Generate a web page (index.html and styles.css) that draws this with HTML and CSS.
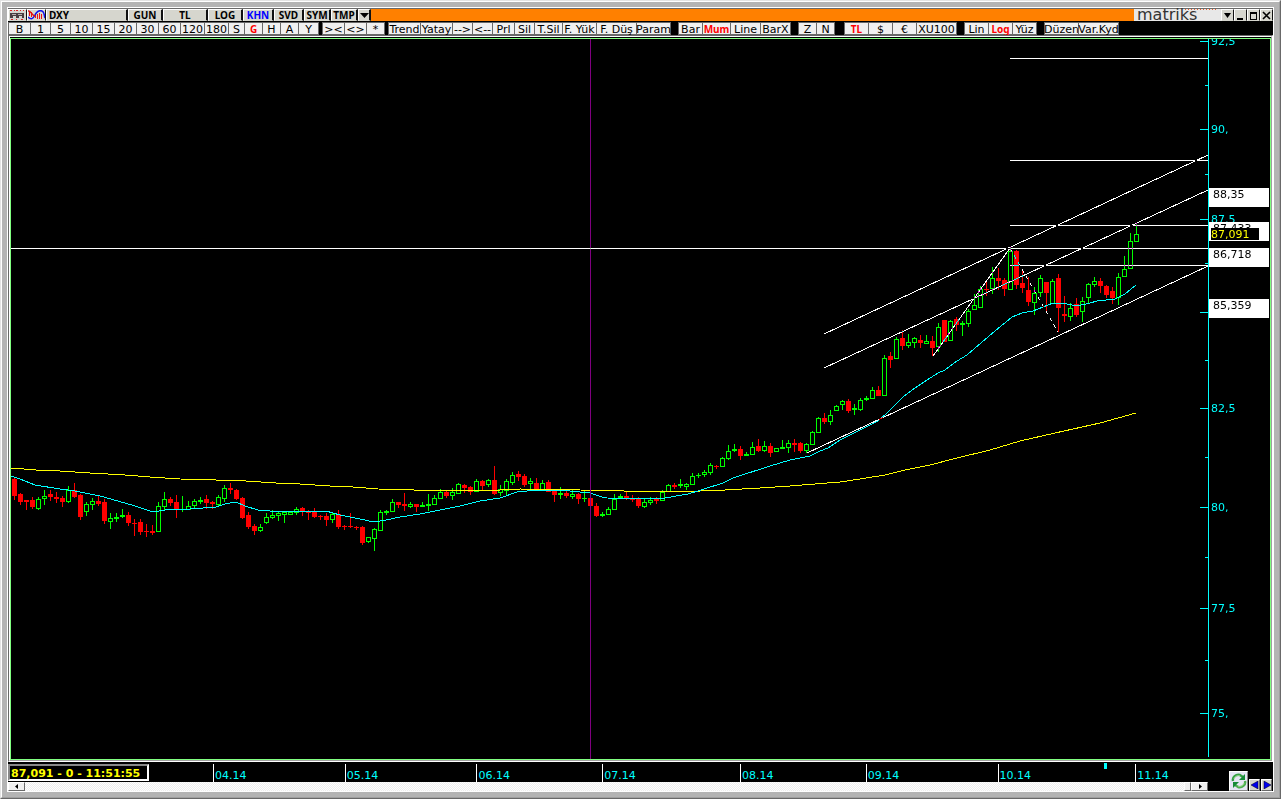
FILE: index.html
```html
<!DOCTYPE html>
<html lang="tr">
<head>
<meta charset="utf-8">
<title>DXY - Matriks</title>
<link rel="stylesheet" href="styles.css">
</head>
<body>
<div class="window"><div class="window-bevel"><main class="panel">
  <header class="titlebar">
    <button class="tool icon-tool" aria-label="Menü"><svg width="17" height="10" viewBox="0 0 17 10" shape-rendering="crispEdges"><path d="M1 0h2v1H1zM5 0h1v1H5zM7 0h2v1H7zM11 0h1v1h-1zM14 0h1v1h-1zM2 9h2v1H2zM7 9h1v1H7zM12 9h2v1h-2z" fill="#e02020"/><path d="M1 8V3h14v5h-2V6h-3v2H7V6H4v2z" fill="#4a4040"/><path d="M3 4h4v1H3zM9 4h4v1H9z" fill="#b8b0b0"/></svg></button>
    <button class="tool icon-tool" aria-label="Grafik"><svg width="17" height="10" viewBox="0 0 17 10"><path d="M1.500 1v5M3.500 2v5M9.500 4v5M11.500 3v6M13.500 4v5M7.500 4v4" stroke="#f01010"/><path d="M0 7C3 10 5 9 7 5S11 0 14 1s2 6 3 7" stroke="#1010ee" stroke-width="1.500" fill="none"/><path d="M0 1C3 0 4 6 7 6" stroke="#e01010" stroke-width="1.500" fill="none"/></svg></button>
    <input class="symbol" aria-label="Sembol" value="DXY">
    <button class="tool w35">GUN</button><button class="tool w45">TL</button><button class="tool w35">LOG</button><button class="tool w31 blue">KHN</button><button class="tool w30">SVD</button><button class="tool w27">SYM</button><button class="tool w27">TMP</button>
    <button class="tool w13" aria-label="Liste"><svg width="9" height="6" viewBox="0 0 9 6"><path d="M0 1h9L4.500 6z"/></svg></button>
    <div class="drag"></div>
    <div class="logo"><svg width="87" height="12" viewBox="0 0 87 12"><path d="M51 .5h31" stroke="#e86030" stroke-dasharray="1 2"/><text class="logo-text" x="3" y="11">matriks</text></svg></div>
    <button class="tool win" aria-label="Seçenekler"><svg width="9" height="9" viewBox="0 0 9 9"><path d="M1 2h7L4.500 7z"/></svg></button>
    <button class="tool win" aria-label="Küçült"><svg width="9" height="9" viewBox="0 0 9 9"><path d="M1 7h6v2H1z"/></svg></button>
    <button class="tool win" aria-label="Büyüt"><svg width="9" height="9" viewBox="0 0 9 9"><path d="M1 1h7v8H1zM2 3v5h5V3z" fill-rule="evenodd"/></svg></button>
    <button class="tool win" aria-label="Kapat"><svg width="9" height="9" viewBox="0 0 9 9"><path d="M1 1l7 7M8 1L1 8" stroke="#000" stroke-width="1.600"/></svg></button>
  </header>

  <nav class="toolbar" aria-label="Grafik araçları">
    <div class="group"><button class="w22">B</button><button class="w20">1</button><button class="w20">5</button><button class="w22">10</button><button class="w22">15</button><button class="w22">20</button><button class="w22">30</button><button class="w22">60</button><button class="w24">120</button><button class="w24">180</button><button class="w16">S</button><button class="w18 red">G</button><button class="w18">H</button><button class="w18">A</button><button class="w20">Y</button></div>
    <div class="group"><button class="w22">&gt;&lt;</button><button class="w22">&lt;&gt;</button><button class="w18">*</button></div>
    <div class="group"><button class="w32">Trend</button><button class="w32">Yatay</button><button class="w20">--&gt;</button><button class="w20">&lt;--</button><button class="w22">Prl</button><button class="w20">Sil</button><button class="w28">T.Sil</button><button class="w34">F. Yük</button><button class="w40">F. Düş</button><button class="w34">Param</button></div>
    <div class="group wide-gap"><button class="w24">Bar</button><button class="w28 red">Mum</button><button class="w30">Line</button><button class="w30">BarX</button></div>
    <div class="group wide-gap"><button class="w18">Z</button><button class="w18">N</button></div>
    <div class="group wider-gap"><button class="w24 red">TL</button><button class="w24">$</button><button class="w24">€</button><button class="w40">XU100</button></div>
    <div class="group wide-gap"><button class="w24">Lin</button><button class="w24 red">Log</button><button class="w24">Yüz</button></div>
    <div class="group wide-gap"><button class="w34">Düzen</button><button class="w40">Var.Kyd</button></div>
  </nav>

  <section class="chart-frame"><div class="chart-inner">
    <svg class="chart" id="chart" viewBox="11 39 1259 720" role="img" aria-label="DXY günlük mum grafiği">
      <g id="candles" shape-rendering="crispEdges"></g>
      <g class="average" shape-rendering="crispEdges">
        <polyline stroke="#ff0" points="11,468 36,470 60,471 90,473 125,475 150,477 180,479 216,480 246,481 276,483 300,484 330,486 353,487 378,489 414,490 500,490 520,489 580,490 624,491 700,491 725,490 760,488 790,486 840,482 860,479 885,475 905,470 930,465 953,459 990,450 1020,441 1055,433 1100,423 1136,413"/>
        <polyline stroke="#0ff" points="11,476 20,479 35,485 60,489 75,491 100,496 118,501 135,506 153,512 165,510 190,509 216,507 225,504 236,502 245,506 258,510 270,511 326,511 340,515 350,517 360,519 374,522 386,520 400,517 420,514 440,510 460,506 480,501 500,498 517,492 538,490 570,491 590,493 602,497 607,498 652,499 665,498 688,494 701,490 723,483 733,478 770,466 790,460 810,456 820,451 828,448 840,440 878,421 887,413 903,397 915,388 927,380 938,373 945,370 957,361 967,355 995,331 1012,317 1022,313 1033,311 1053,303 1062,303 1077,306 1090,303 1097,301 1115,299 1125,294 1136,285"/>
      </g>
      <rect x="590" y="39" width="1" height="720" fill="#800080"/>
      <g class="drawing" shape-rendering="crispEdges">
        <path d="M1010 58.500H1208"/><path d="M1010 160.500H1208"/><path d="M1010 225.500H1208"/><path d="M11 248.500H1208"/><path d="M1010 265.500H1208"/>
        <path d="M824 334L1208 155"/><path d="M824 368L1208 190"/><path d="M807 453L1208 266"/>
        <path d="M933 356L1010 248"/><path d="M1010 248L1058 332" stroke-dasharray="4 4"/>
      </g>
      <g id="axis"></g>
    </svg>
  </div></section>

  <footer class="footer">
    <div class="timeline">
      <div class="dates">
        <div class="quote">87,091 - 0 - 11:51:55</div>
        <div class="lead"></div>
        <div class="month g132">04.14</div><div class="month g132">05.14</div><div class="month g126">06.14</div><div class="month g138">07.14</div><div class="month g126">08.14</div><div class="month g132">09.14</div><div class="month g138 marked">10.14</div><div class="month g72">11.14</div>
      </div>
      <div class="scroll">
        <button class="scroll-btn" aria-label="Sola kaydır"><svg width="4" height="5" viewBox="0 0 4 5"><path d="M3 0v5L0 2.500z"/></svg></button>
        <div class="track"></div><div class="thumb"></div>
        <button class="scroll-btn" aria-label="Sağa kaydır"><svg width="4" height="5" viewBox="0 0 4 5"><path d="M1 0v5l3-2.500z"/></svg></button>
      </div>
    </div>
    <div class="navigation">
      <button class="refresh" aria-label="Yenile"><svg width="16" height="16" viewBox="0 0 16 16"><path d="M2 8C1 4 5 1 9 2l3 2" fill="none" stroke="#35a045" stroke-width="2.400"/><path d="M14 1v6H8z" fill="#168a38"/><path d="M14 8c1 4-3 7-7 6l-3-2" fill="none" stroke="#4cad50" stroke-width="2.400"/><path d="M2 15V9h6z" fill="#168a38"/><path d="M3 6c1-3 4-4 6-3M13 10c-1 3-4 4-6 3" fill="none" stroke="#a5e09a" stroke-width="1"/></svg></button>
      <button class="nav" aria-label="Önceki"><svg width="8" height="8" viewBox="0 0 8 8"><path d="M7 0v8L0 4z" fill="#00e" stroke="#000" stroke-width=".5"/></svg></button>
      <button class="nav" aria-label="Sonraki"><svg width="8" height="8" viewBox="0 0 8 8"><path d="M1 0v8l7-4z" fill="#00e" stroke="#000" stroke-width=".5"/></svg></button>
    </div>
  </footer>
</main></div></div>
<script src="chart.js"></script>
</body>
</html>
```

FILE: styles.css
```css
* { box-sizing: border-box; }
body { margin: 0; background: #b4b4b4; font: 11px/11px "DejaVu Sans", sans-serif; }
button, input { margin: 0; padding: 0; border: 0; border-radius: 0; font: inherit; color: #000; white-space: nowrap; }
button { display: flex; align-items: center; justify-content: center; flex: none; }
svg { display: block; flex: none; }

.window { height: 100vh; border: 1px solid; border-color: #e3e3e3 #696969 #696969 #e3e3e3; }
.window-bevel { height: 100%; padding: 5px; border: 1px solid; border-color: #fff #a0a0a0 #a0a0a0 #fff; }
.panel { height: 100%; border: 1px solid #fff; background: #000; display: flex; flex-direction: column; }

/* Title bar */
.titlebar { display: flex; flex: none; height: 14px; border-top: 1px solid #696969; border-bottom: 1px solid #000; background: #000; font: bold 10px/11px "Noto Sans", sans-serif; }
.tool, .symbol { height: 12px; background: #d6d6ce; border: 1px solid; border-color: #fff #444 #d6d6ce #fff; }
.tool { border-right: 2px solid #111; }
.icon-tool { width: 19px; border-right-width: 1px; }
.symbol { width: 82px; padding-left: 2px; border-right: 2px solid #111; }
.blue { color: #00f; }
.drag { flex: 1; background: #ff8000; }
.logo { width: 87px; background: #e8e8e8; }
.logo svg { overflow: visible; }
.logo-text { font: 16px "DejaVu Sans", sans-serif; fill: #333; }
.win { width: 13px; border-right-width: 1px; }

/* Toolbar */
.toolbar { display: flex; flex: none; height: 13px; background: #000; }
.group { display: flex; border: 1px solid #696969; border-left: 0; margin-right: 3px; }
.wide-gap { margin-left: 4px; }
.wider-gap { margin-left: 6px; }
.group button { height: 11px; padding-top: 2px; border-left: 1px solid #696969; background: #f0f0f0; }
.group .red { color: #f00; font: bold 10px/11px "Noto Sans", sans-serif; }

.w13 { width: 13px; } .w16 { width: 16px; } .w18 { width: 18px; } .w20 { width: 20px; }
.w22 { width: 22px; } .w24 { width: 24px; } .w27 { width: 27px; } .w28 { width: 28px; }
.w30 { width: 30px; } .w31 { width: 31px; } .w32 { width: 32px; } .w34 { width: 34px; }
.w35 { width: 35px; } .w40 { width: 40px; } .w45 { width: 45px; }

/* Chart */
.chart-frame { flex: 1; min-height: 0; border: 1px solid; border-color: #696969 #fff #fff #696969; }
.chart-inner { height: 100%; padding-top: 1px; border: 1px solid; border-color: #fff #a0a0a0 #a0a0a0 #fff; background: #000; }
.chart { width: 100%; height: 100%; border: 1px solid #80ff80; background: #000; isolation: isolate; }
.average polyline { fill: none; stroke-width: 1; }
.drawing path { fill: none; stroke: #fff; stroke-width: 1; mix-blend-mode: difference; }
.scale { fill: #0ff; }
.level { fill: #000; }
.last { fill: #ff0; }

/* Dates, scroll bar and navigation */
.footer { display: flex; flex: none; height: 29px; }
.timeline { flex: 1; min-width: 0; display: flex; flex-direction: column; }
.dates { display: flex; height: 20px; padding-top: 2px; color: #0ff; }
.quote { flex: none; width: 141px; height: 17px; padding: 2px 0 0 1px; border: 2px solid; border-color: #888 #fff #fff #888; color: #ff0; font-weight: bold; white-space: nowrap; }
.lead { flex: 63 1 0; padding-left: 2px; }
.month { position: relative; min-width: 0; padding: 6px 0 0 1px; border-left: 1px solid #fff; }
.g132 { flex: 132 1 0; } .g126 { flex: 126 1 0; } .g138 { flex: 138 1 0; } .g72 { flex: 72 1 0; }
.marked::after { content: ""; position: absolute; left: 77%; top: -1px; width: 3px; height: 6px; background: #0ff; }
.scroll { display: flex; height: 9px; }
.scroll-btn { width: 17px; height: 9px; background: #f0f0f0; border: 1px solid; border-color: #fff #696969 #696969 #fff; }
.track { flex: 1; background: repeating-conic-gradient(#fff 0 25%, #eee 0 50%) 0 0 / 2px 2px; }
.thumb { width: 7px; background: #f0f0f0; border: 1px solid; border-color: #fff #696969 #696969 #fff; }
.navigation { display: flex; flex: none; width: 65px; padding-right: 1px; align-items: flex-end; justify-content: flex-end; gap: 1px; }
.refresh { width: 19px; height: 20px; background: #e4e4f4; border: 1px solid; border-color: #fff #888 #888 #fff; }
.nav { width: 11px; height: 12px; background: #d6d6ce; border: 1px solid; border-color: #fff #696969 #696969 #fff; }
```

FILE: chart.js
```js
// Each run of bars: top offset, then rows of direction, high, body top, body bottom, low (3 units per pixel).
const runs = [
  [450, `r 84 87 138 150;r 129 132 156 165;r 150 150 156 180;r 142 150 171 177;g 141 147 177 180;g 120 138 147 165;r 120 132 141 153;r 126 141 147 159;r 138 144 156 171;g 108 120 156 159;r 99 120 141 144;r 132 135 201 210;g 156 162 186 198;g 144 153 165 180;r 138 153 162 168;r 147 156 213 222;g 189 204 216 237;g 189 201 207 216;g 177 195 201 204;r 186 195 219 228;r 207 219 222 258;r 207 216 246 255;r 222 243 246 261;r 225 243 249 255;g 156 168 246 246;g 126 147 171 180;r 141 147 159 168;r 135 156 177 204;g 138 177 180 186;g 153 168 180 180;g 147 153 168 174;g 141 150 156 162;r 135 147 159 177;r 153 156 162 177;g 135 141 165 171;g 105 114 147 156;r 99 114 120 132;r 117 120 147 150;r 141 144 204 207;r 186 195 231 237;r 222 228 243 255;g 222 231 243 246;g 189 201 219 222;g 180 195 204 207;g 183 189 198 213;g 183 186 195 219;g 183 186 195 195;g 171 177 189 195;r 171 174 186 198;r 180 184 189 210;r 174 186 201 204;r 195 198 201 210;r 189 198 210 228;g 186 192 210 219;r 180 192 231 237;r 225 228 231 240;r 189 228 231 234;r 228 231 234 240;r 228 231 279 285;g 261 261 276 279;g 234 237 267 303;g 180 186 243 243;g 180 183 189 195;g 147 156 186 186;r 156 156 165 174;r 129 162 168 183;g 156 162 171 174;r 162 162 171 186;g 156 165 171 171;g 132 162 168 183;g 135 144 165 165;g 117 126 147 147;r 120 126 138 144;g 114 126 138 150;g 99 102 132 132;r 102 105 114 129;r 108 111 126 135;g 87 93 126 126;r 90 93 108 120;g 87 90 105 111;r 48 90 132 135;g 105 117 129 138;g 87 93 123 135;g 66 75 99 105;r 63 72 81 93;r 72 78 105 111;g 84 93 102 120;r 84 99 120 120;g 90 99 120 123;r 90 96 126 126;r 120 123 135 156;g 111 129 135 147;r 123 129 138 144;g 120 132 141 147;r 129 132 147 162;g 120 144 147 156`],
  [400, `r 294 294 318 318;r 309 318 348 351;g 336 342 348 351;g 321 327 345 345;g 282 297 330 330;g 282 288 294 297;r 276 288 297 300;r 285 297 300 306;r 291 297 318 324;g 297 306 321 324;g 291 300 309 315;r 291 297 303 312;g 270 276 303 303;g 252 255 276 276;r 249 255 261 267;g 237 252 258 264;g 249 252 261 270;g 219 228 255 255;g 219 225 228 234;g 210 216 225 231;g 189 195 219 225;r 195 198 201 207;g 171 174 201 201;g 135 153 177 180;g 132 147 153 156;r 138 147 168 180;g 156 162 168 168;g 126 141 165 165;r 117 138 153 156;g 123 138 153 156;r 129 138 159 171;g 144 144 156 156;g 120 141 147 147;g 120 129 144 159;r 117 129 135 156;r 126 129 153 159;g 129 132 153 158;g 93 96 135 135;g 51 54 99 99;r 39 54 66 72;g 30 45 66 75;g 15 18 33 33`],
  [310, `g 270 273 285 300;r 267 273 303 309;g 282 294 300 315;g 264 270 300 303;g 258 264 270 273;g 231 240 267 267;r 228 240 258 258;g 135 144 258 258;r 126 138 150 174;g 81 87 147 147;r 60 84 108 120;g 72 96 108 114;g 81 84 99 114;r 75 90 99 114;g 75 93 102 102;r 78 93 114 138;g 39 51 111 126;r 30 30 96 96;g 30 33 93 93;r 21 27 45 63;g 33 39 45 78`],
  [215, `g 282 288 327 336;g 237 270 285 285;g 213 222 279 279;r 201 222 225 243;g 156 189 222 237;r 159 189 198 225;r 189 195 222 243;g 96 108 225 225;r 105 108 210 222;r 168 204 219 234;r 186 225 261 273;g 216 234 264 300;g 180 189 234 246;r 201 201 234 288;g 192 198 267 267;r 177 189 279 351;r 243 297 303 321;g 264 279 306 318;r 249 267 300 306;g 246 258 291 321`],
  [150, `g 399 402 444 459;g 381 393 405 411;r 384 393 408 429;r 405 408 435 444;r 411 423 444 462;g 369 381 444 465;g 318 357 381 381;g 249 273 357 357;g 219 252 276 276`]
];
const rect = (x, y, w, h, fill) => `<rect x="${x}" y="${y}" width="${w}" height="${h}" fill="${fill}"/>`;
let bars = "";
let x = 12;
for (const [top, rows] of runs) {
  for (const row of rows.split(";")) {
    const [kind, ...values] = row.split(" ");
    const [high, open, close, low] = values.map(v => top + Math.round(v / 3));
    const color = kind === "g" ? "#00ff00" : "#ff0000";
    bars += rect(x + 2, high, 1, low - high, color) + rect(x, open, 5, close - open, color);
    if (kind === "g" && close - open > 2) bars += rect(x + 1, open + 1, 3, close - open - 2, "#000");
    x += 6;
  }
}
document.getElementById("candles").innerHTML = bars;

let axis = rect(1208, 39, 1, 718, "#0ff");
const text = (x, y, value, name) => `<text x="${x}" y="${y}" class="${name}">${value}</text>`;
for (const [y, label] of [[41, "92,5"], [129, "90,"], [219, "87,5"], [312, ""], [408, "82,5"], [507, "80,"], [608, "77,5"], [713, "75,"]])
  axis += rect(1200, y, 8, 1, "#0ff") + text(1211, y + 4, label, "scale");
for (const y of [85, 174, 263, 360, 457, 557, 660]) axis += rect(1205, y, 3, 1, "#0ff");
for (const [y, label] of [[188, "88,35"], [222, "87,433"], [248, "86,718"], [299, "85,359"]])
  axis += rect(1209, y, 60, 19, "#fff") + text(1213, y + 10, label, "level");
axis += rect(1211, 228, 48, 12, "#000") + text(1211, 238, "87,091", "last");
document.getElementById("axis").innerHTML = axis;
```
